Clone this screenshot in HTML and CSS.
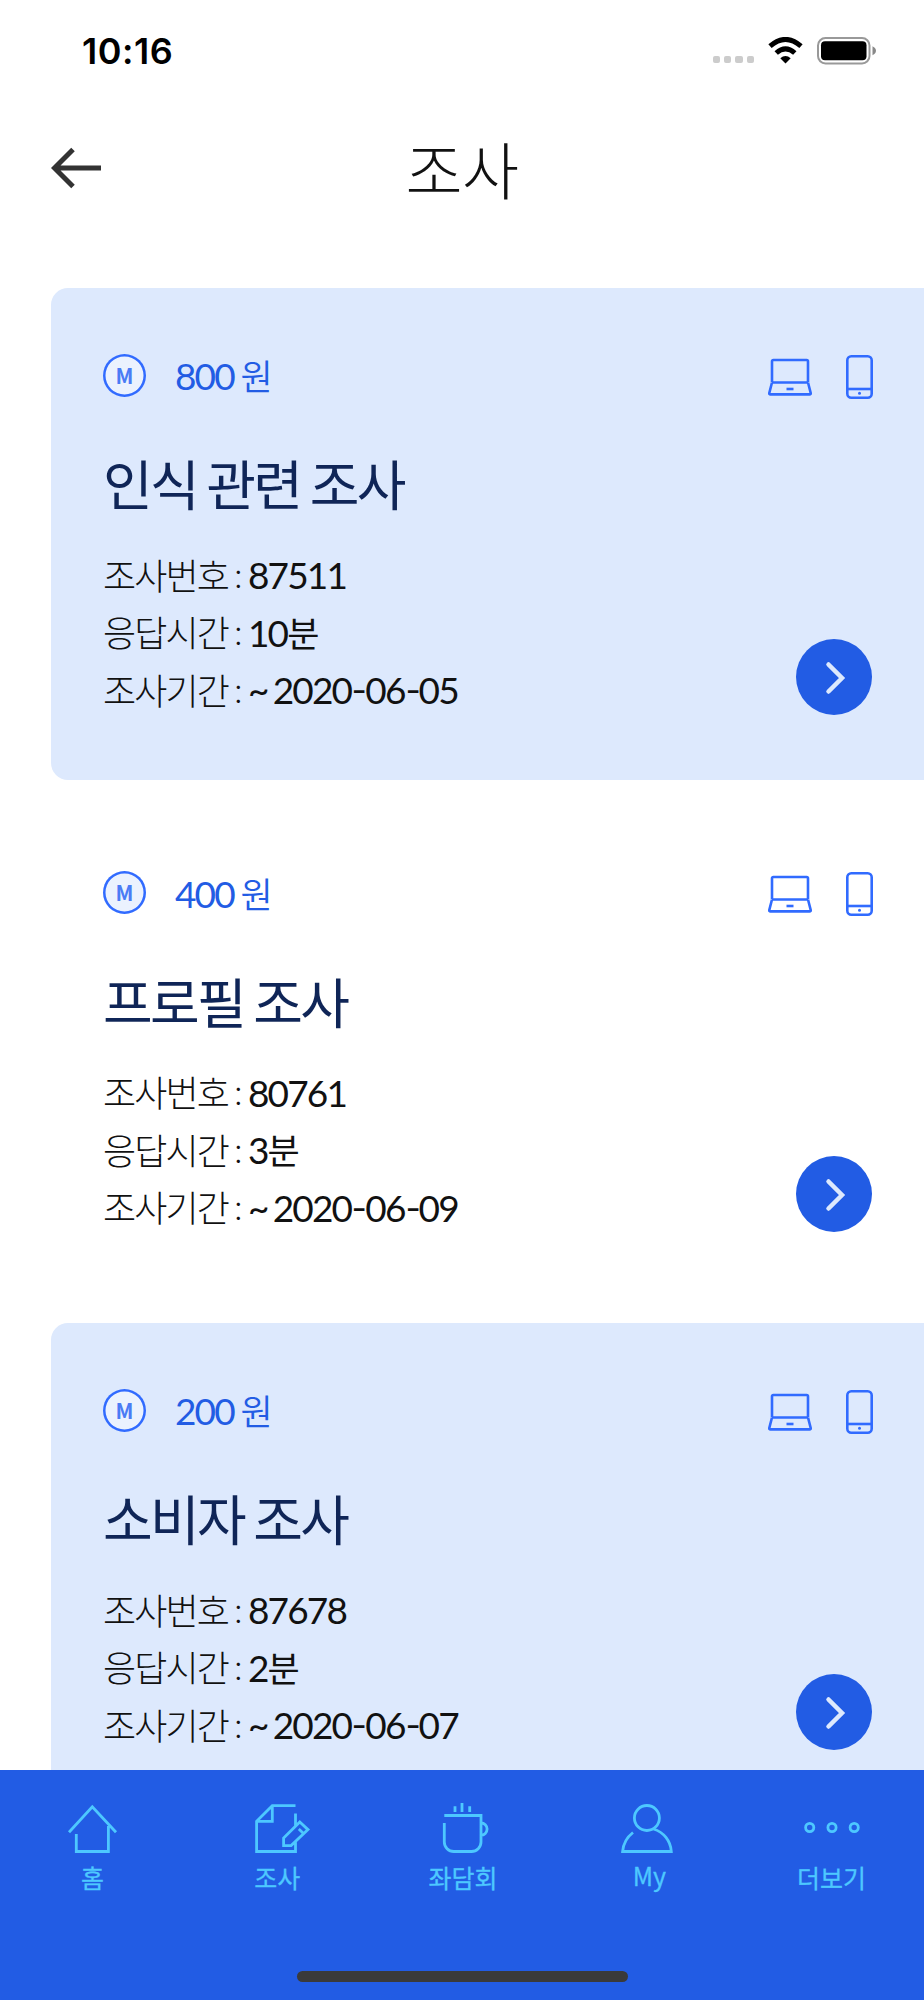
FILE: index.html
```html
<!DOCTYPE html>
<html lang="ko">
<head>
<meta charset="utf-8">
<title>조사</title>
<link rel="stylesheet" href="styles.css">
</head>
<body>
<svg class="sprite" width="0" height="0" aria-hidden="true">
  <symbol id="laptop" viewBox="0 0 44 38"><path d="M4 24V3.400Q4 2 5.400 2H38.600Q40 2 40 3.400V24M4 24.500H40M4 24.500L1.300 35Q1 36.400 2.400 36.400H41.600Q43 36.400 42.700 35L40 24.500"/><path d="M18.500 31H25.500" stroke-width="2.600"/></symbol>
  <symbol id="phone" viewBox="0 0 27 44"><rect x="1.300" y="1.300" width="24.400" height="41.400" rx="4"/><path d="M1.300 34H25.700"/><circle cx="13.500" cy="38.300" r="1.500" fill="#316bff" stroke="none"/></symbol>
  <symbol id="next" viewBox="0 0 76 76"><path d="M32.500 25.500L46 39L32.500 52.500"/></symbol>
</svg>
<div class="app">
  <div class="status">
    <span class="clock">10:16</span>
    <div class="indicators">
      <div class="signal"><i></i><i></i><i></i><i></i></div>
      <svg class="wifi" width="35" height="27" viewBox="0 0 35 27"><path d="M2 9.200Q17.500-4.300 33 9.200" stroke-width="5"/><path d="M8.200 16Q17.500 7.600 26.800 16" stroke-width="5"/><path class="solid" d="M12.300 21.200Q17.500 16.800 22.700 21.200L17.500 26.500Z"/></svg>
      <svg class="battery" width="60" height="28" viewBox="0 0 60 28"><rect class="shell" x="1" y="1" width="51.500" height="25.500" rx="7.500"/><rect x="4" y="4.300" width="45.500" height="19" rx="4"/><path class="cap" d="M55.500 9.300Q59 11 59 13.800Q59 16.600 55.500 18.300Z"/></svg>
    </div>
  </div>
  <header class="header">
    <svg class="back" width="52" height="42" viewBox="0 0 52 42"><path d="M22 2.500L3.500 21L22 39.500M3.500 21H50"/></svg>
    <h1>조사</h1>
  </header>
  <main class="list">
    <article class="card tinted">
      <div class="top"><span class="coin">M</span><span class="reward">800 <span class="unit">원</span></span><svg class="device laptop"><use href="#laptop"/></svg><svg class="device phone"><use href="#phone"/></svg></div>
      <h2>인식 관련 조사</h2>
      <div class="body">
        <dl><div><dt>조사번호 <b>:</b></dt><dd>87511</dd></div><div><dt>응답시간 <b>:</b></dt><dd>10<span class="unit">분</span></dd></div><div><dt>조사기간 <b>:</b></dt><dd>~ 2020<i>-</i>06<i>-</i>05</dd></div></dl>
        <svg class="go"><use href="#next"/></svg>
      </div>
    </article>
    <article class="card">
      <div class="top"><span class="coin">M</span><span class="reward">400 <span class="unit">원</span></span><svg class="device laptop"><use href="#laptop"/></svg><svg class="device phone"><use href="#phone"/></svg></div>
      <h2>프로필 조사</h2>
      <div class="body">
        <dl><div><dt>조사번호 <b>:</b></dt><dd>80761</dd></div><div><dt>응답시간 <b>:</b></dt><dd>3<span class="unit">분</span></dd></div><div><dt>조사기간 <b>:</b></dt><dd>~ 2020<i>-</i>06<i>-</i>09</dd></div></dl>
        <svg class="go"><use href="#next"/></svg>
      </div>
    </article>
    <article class="card tinted">
      <div class="top"><span class="coin">M</span><span class="reward">200 <span class="unit">원</span></span><svg class="device laptop"><use href="#laptop"/></svg><svg class="device phone"><use href="#phone"/></svg></div>
      <h2>소비자 조사</h2>
      <div class="body">
        <dl><div><dt>조사번호 <b>:</b></dt><dd>87678</dd></div><div><dt>응답시간 <b>:</b></dt><dd>2<span class="unit">분</span></dd></div><div><dt>조사기간 <b>:</b></dt><dd>~ 2020<i>-</i>06<i>-</i>07</dd></div></dl>
        <svg class="go"><use href="#next"/></svg>
      </div>
    </article>
  </main>
  <footer class="tabbar">
    <nav>
      <a><svg viewBox="0 0 60 60"><path d="M7 32.300L30.300 6.800L54 32.300M14.300 34V51.500H46.400V26"/></svg><span>홈</span></a>
      <a><svg viewBox="0 0 60 60"><path d="M48.500 5.700H25.300L9.600 21.300V51.500H48.500V42M25.300 5.700V21.300H9.600M48.500 13.500V26M52.800 22L61 29.600L44.100 45.600H36.600V38ZM51.800 29L56 33"/></svg><span>조사</span></a>
      <a><svg viewBox="0 0 60 60"><path d="M12.300 15.500H49V42A9.500 9.500 0 0 1 39.500 51.500H21.800A9.500 9.500 0 0 1 12.300 42V23M49 23A6.100 6.100 0 0 1 49 35.200M23 6.300V12M30 3V12M37.700 6.300V12"/></svg><span class="wide">좌담회</span></a>
      <a><svg viewBox="0 0 60 60"><circle cx="29.900" cy="18" r="12.500"/><path d="M36.500 29A25 25 0 0 1 54.300 51.500H5.600A27 27 0 0 1 16 32.500"/></svg><span class="latin">My</span></a>
      <a><svg viewBox="0 0 60 60"><circle cx="7.700" cy="27.500" r="4.100"/><circle cx="30" cy="27.500" r="4.100"/><circle cx="52.200" cy="27.500" r="4.100"/></svg><span>더보기</span></a>
    </nav>
    <div class="handle"></div>
  </footer>
</div>
</body>
</html>
```
FILE: styles.css
```css
* { box-sizing: border-box; margin: 0; padding: 0; }
body { background: #fff; color: #111; font-family: Lato, "Noto Sans CJK KR", sans-serif; }
.sprite { display: block; }
.app { width: 924px; height: 2000px; display: flex; flex-direction: column; overflow: hidden; }
svg { fill: none; flex: none; }

.status { height: 102px; flex: none; display: flex; justify-content: space-between; padding: 29px 47px 0 82px; }
.clock { font: 600 36px/45px Inter, sans-serif; letter-spacing: 0.500px; color: #000; }
.indicators { display: flex; align-items: flex-start; padding-top: 7.500px; }
.signal { display: flex; gap: 4px; margin: 19px 14px 0 0; }
.signal i { width: 7.300px; height: 7.300px; border-radius: 2px; background: #ccc; }
.wifi { stroke: #000; margin-right: 14px; }
.wifi .solid { fill: #000; stroke: none; }
.battery { fill: #000; }
.battery .shell { fill: none; stroke: #999; stroke-width: 2; }
.battery .cap { fill: #888; }

.header { height: 186px; flex: none; display: grid; grid-template-columns: 52px 1fr 52px; padding: 30px 51px 0; align-items: start; }
.back { stroke: #333; stroke-width: 5; margin-top: 15px; }
h1 { font: 300 62px/72px "Noto Sans CJK KR", sans-serif; letter-spacing: -0.500px; text-align: center; }

.list { flex: 1; min-height: 0; overflow: hidden; padding-left: 51.400px; }
.card { height: 491.500px; margin-bottom: 26px; padding: 65px 52px 0 51.600px; border-radius: 17px 0 0 17px; }
.tinted { background: #dde9fd; }
.top { height: 44px; display: flex; align-items: center; color: #225ce4; }
.coin { width: 43px; height: 43px; box-shadow: inset 0 0 0 2.500px #316bff; border-radius: 50%; background: #ebf2fe; color: #4a7bf5; font: 700 21px/42px "Noto Sans CJK KR", sans-serif; text-align: center; }
.reward { flex: 1; margin-left: 29px; padding-top: 2px; font-size: 37px; letter-spacing: -1.850px; line-height: 44px; }
.unit { font-size: 35px; }
.reward .unit { font-weight: 350; margin-left: -1px; }
.device { stroke: #316bff; stroke-width: 2.600; margin: 3px -1px 0 0; }
.laptop { width: 44px; height: 38px; }
.phone { width: 27px; height: 44px; margin-left: 35px; }
h2 { margin-top: 59px; font-size: 54px; font-weight: 400; line-height: 60px; letter-spacing: -2.700px; word-spacing: -1.700px; color: #0f2557; }
.body { display: flex; justify-content: space-between; align-items: flex-end; margin-top: 30px; }
dl > div { display: flex; height: 57.500px; font-size: 37px; line-height: 57.500px; letter-spacing: -1.850px; white-space: nowrap; }
dt { font-weight: 300; font-size: 36px; width: 145px; padding-top: 1.500px; word-spacing: -2px; }
dt b { font-weight: 300; vertical-align: 2px; line-height: 1; }
dd { word-spacing: -2.500px; }
dd i { display: inline-block; font-style: normal; line-height: 1; padding: 0 1.100px; vertical-align: 1px; transform: scaleX(1.150); }
.go { width: 76px; height: 76px; border-radius: 50%; background: #225ce4; margin-bottom: 4px; stroke: #dde9fd; stroke-width: 4.500; stroke-linecap: round; }

.tabbar { height: 230px; flex: none; background: #225ce4; display: flex; flex-direction: column; align-items: center; color: #4dc8ff; }
nav { width: 100%; display: grid; grid-template-columns: repeat(5, 1fr); padding-top: 30px; }
nav a { display: flex; flex-direction: column; align-items: center; }
nav svg { width: 60px; height: 60px; stroke: #4dc8ff; stroke-width: 2.800; overflow: visible; }
nav span { margin-top: -1px; font: 400 25px/36px "Noto Sans CJK KR", sans-serif; -webkit-text-stroke: 0.300px #4dc8ff; }
nav .wide { margin-left: 2px; }
nav .latin { margin: -3px 0 0 5px; }
.handle { width: 331px; height: 11px; flex: none; border-radius: 6px; background: #3a3a3a; margin-top: 76px; }
```
